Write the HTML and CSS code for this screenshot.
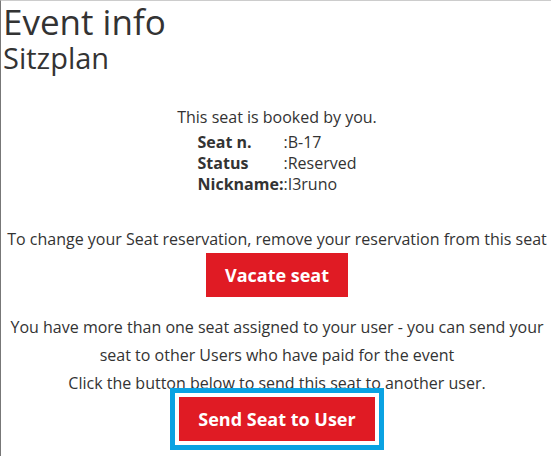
FILE: index.html
```html
<!DOCTYPE html>
<html>
<head>
<meta charset="utf-8">
<link rel="stylesheet" href="styles.css">
</head>
<body>
<div class="frame">
  <h1 class="title">Event info</h1>
  <h2 class="subtitle">Sitzplan</h2>
  <div class="content">
    <p class="booked">This seat is booked by you.</p>
    <table class="details">
      <tr><th>Seat n.</th><td>:B-17</td></tr>
      <tr><th>Status</th><td>:Reserved</td></tr>
      <tr><th>Nickname:</th><td>:I3runo</td></tr>
    </table>
    <p class="change">To change your Seat reservation, remove your reservation from this seat</p>
    <button class="btn">Vacate seat</button>
    <p class="multi">You have more than one seat assigned to your user - you can send your seat to other Users who have paid for the event<br>Click the button below to send this seat to another user.</p>
    <button class="btn btn-send">Send Seat to User</button>
  </div>
</div>
</body>
</html>
```
FILE: styles.css
```css
html, body {
  margin: 0;
  padding: 0;
  background: #fff;
}
body {
  font-family: "Open Sans", "Liberation Sans", sans-serif;
  color: #333;
  font-size: 16px;
}
.frame {
  border-left: 1px solid #777;
  border-top: 1px solid #ccc;
  min-height: 456px;
  box-sizing: border-box;
  padding-left: 2px;
}
.title {
  margin: 0;
  font-weight: 400;
  font-size: 35px;
  line-height: 41px;
}
.subtitle {
  margin: 0;
  font-weight: 400;
  font-size: 29px;
  line-height: 32px;
}
.content {
  display: flex;
  flex-direction: column;
  align-items: center;
  text-align: center;
}
.booked {
  margin: 33px 0 0;
  line-height: 21px;
}
.details {
  border-collapse: collapse;
  margin: 4px 0 0;
  text-align: left;
}
.details th {
  font-weight: 700;
  padding: 0;
  line-height: 21px;
}
.details td {
  padding: 0;
  line-height: 21px;
}
.change {
  margin: 34px 0 0;
  line-height: 21px;
}
.btn {
  margin-top: 3px;
  background: #e01b24;
  color: #fff;
  border: none;
  font-family: "Open Sans", "Liberation Sans", sans-serif;
  font-weight: 700;
  font-size: 18px;
  height: 44px;
  padding: 0 19px;
}
.multi {
  margin: 16px 0 0;
  line-height: 28px;
}
.btn-send {
  outline: 5px solid #0aa2e2;
  outline-offset: 4px;
  margin-top: 0;
}
```
